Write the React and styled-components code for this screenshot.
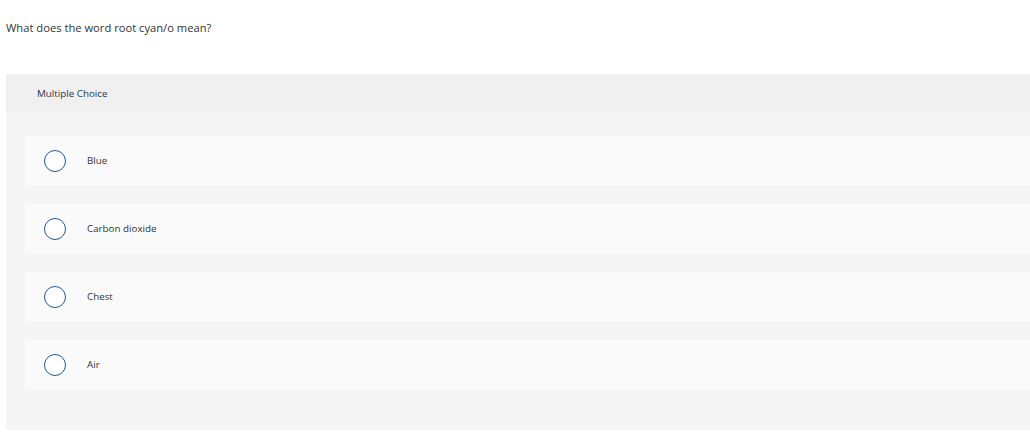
import React from 'react';
import styled, { createGlobalStyle } from 'styled-components';

const GlobalStyle = createGlobalStyle`
  html, body {
    margin: 0;
    padding: 0;
    background: #fff;
    font-family: "Open Sans", Lato, sans-serif;
    color: #333;
  }
`;

const Page = styled.div`
  width: 1030px;
  height: 435px;
  overflow: hidden;
  padding-top: 21px;
  box-sizing: border-box;
`;

const Question = styled.p`
  margin: 0 0 39px 6px;
  font-size: 11.2px;
  line-height: 14px;
  color: #333;
`;

const Panel = styled.section`
  margin-left: 6px;
  background: #f5f5f5;
`;

const PanelHeader = styled.div`
  height: 38px;
  background: #f0f0f0;
  display: flex;
  align-items: center;
  padding-left: 31px;
  font-size: 9.8px;
  color: #2d3545;
`;

const Options = styled.div`
  display: flex;
  flex-direction: column;
  gap: 18px;
  padding: 24px 0 40px 19px;
`;

const Option = styled.label`
  height: 50px;
  background: #fafafa;
  display: flex;
  align-items: center;
  padding-left: 19px;
  cursor: pointer;
`;

const Radio = styled.span`
  width: 22px;
  height: 22px;
  box-sizing: border-box;
  border-radius: 50%;
  border: 1.5px solid #1f5a92;
  background: #fff;
  flex-shrink: 0;
`;

const Label = styled.span`
  margin-left: 21px;
  margin-top: -1px;
  font-size: 9.8px;
  color: #333;
`;

const choices = ['Blue', 'Carbon dioxide', 'Chest', 'Air'];

export default function App() {
  return (
    <Page>
      <GlobalStyle />
      <Question>What does the word root cyan/o mean?</Question>
      <Panel>
        <PanelHeader>Multiple Choice</PanelHeader>
        <Options>
          {choices.map((c) => (
            <Option key={c}>
              <Radio />
              <Label>{c}</Label>
            </Option>
          ))}
        </Options>
      </Panel>
    </Page>
  );
}
